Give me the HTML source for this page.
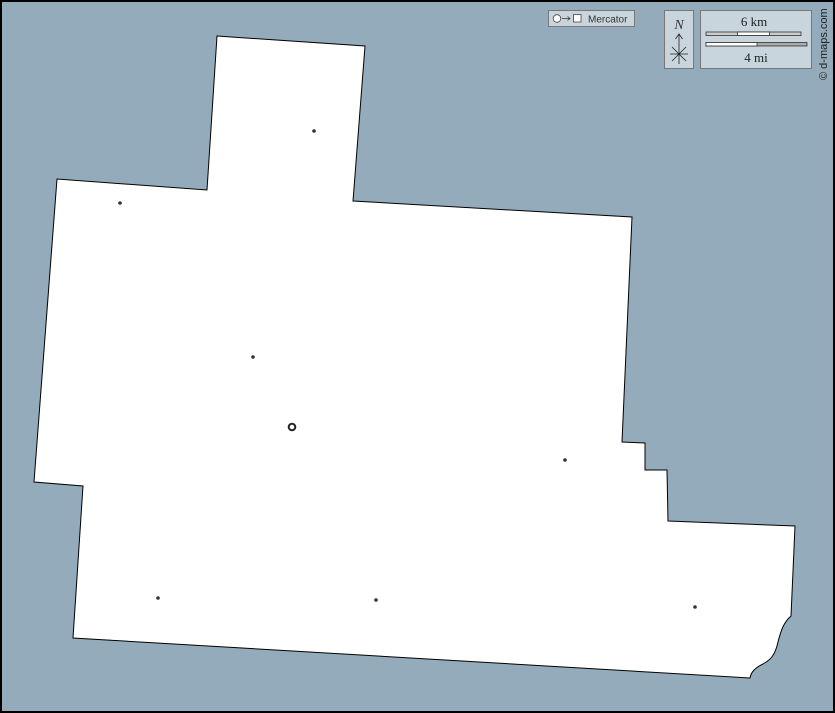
<!DOCTYPE html><html><head><style>html,body{margin:0;padding:0;background:#94abbb}svg{display:block}</style></head><body>
<svg width="835" height="713" viewBox="0 0 835 713" xmlns="http://www.w3.org/2000/svg">
<rect x="1" y="1" width="833" height="711" fill="#94abbb" stroke="#000" stroke-width="2"/>
<path d="M217,36 L365,46 L353,201 L632,217 L622,442 L645,443 L645,470 L667,470 L668,521 L795,526 L791,616 C784,622 781,630 778,642 C775,656 770,660 763,664 C755,668 751,672 750,678 L73,638 L83,486 L34,482 L57,179 L207,190 Z" fill="#fff" stroke="#000" stroke-width="1"/>
<g fill="#333">
<circle cx="314" cy="131" r="1.8"/><circle cx="120" cy="203" r="1.8"/><circle cx="253" cy="357" r="1.8"/>
<circle cx="565" cy="460" r="1.8"/><circle cx="158" cy="598" r="1.8"/><circle cx="376" cy="600" r="1.8"/><circle cx="695" cy="607" r="1.8"/>
</g>
<circle cx="292" cy="427" r="3.3" fill="none" stroke="#222" stroke-width="2"/>
<rect x="548.5" y="10.5" width="86" height="16" fill="#c8d5dd" stroke="#777"/>
<circle cx="557" cy="18.5" r="3.8" fill="#fff" stroke="#444" stroke-width="0.8"/>
<path d="M562,18.5 H570 M567.5,16.5 L570,18.5 L567.5,20.5" stroke="#333" stroke-width="0.8" fill="none"/>
<rect x="573.5" y="14.5" width="7.5" height="7.5" fill="#fff" stroke="#444" stroke-width="0.8"/>
<text x="588" y="22.5" font-family="Liberation Sans, sans-serif" font-size="10" fill="#333">Mercator</text>
<rect x="664.5" y="10.5" width="29" height="58" fill="#c8d5dd" stroke="#777"/>
<text x="679" y="29" text-anchor="middle" font-family="Liberation Serif, serif" font-style="italic" font-size="14" fill="#333">N</text>
<g stroke="#222" stroke-width="0.8" fill="none"><path d="M679,34 V64 M675.5,39 L679,34 L682.5,39 M672,47 L686,61 M686,47 L672,61 M670,54 H688"/></g>
<rect x="700.5" y="10.5" width="111" height="58" fill="#c8d5dd" stroke="#777"/>
<text x="754" y="26" text-anchor="middle" font-family="Liberation Serif, serif" font-size="13" fill="#222">6 km</text>
<rect x="706" y="32" width="95" height="3.5" fill="#ccc" stroke="#333" stroke-width="0.8"/>
<rect x="737.5" y="32" width="32" height="3.5" fill="#fff" stroke="#333" stroke-width="0.8"/>
<rect x="706" y="42.5" width="101" height="3.5" fill="#aaa" stroke="#333" stroke-width="0.8"/>
<rect x="706" y="42.5" width="51" height="3.5" fill="#fff" stroke="#333" stroke-width="0.8"/>
<text x="756" y="62" text-anchor="middle" font-family="Liberation Serif, serif" font-size="13" fill="#222">4 mi</text>
<text transform="translate(827,80) rotate(-90)" font-family="Liberation Sans, sans-serif" font-size="11" fill="#222">© d-maps.com</text>
</svg>
</body></html>
